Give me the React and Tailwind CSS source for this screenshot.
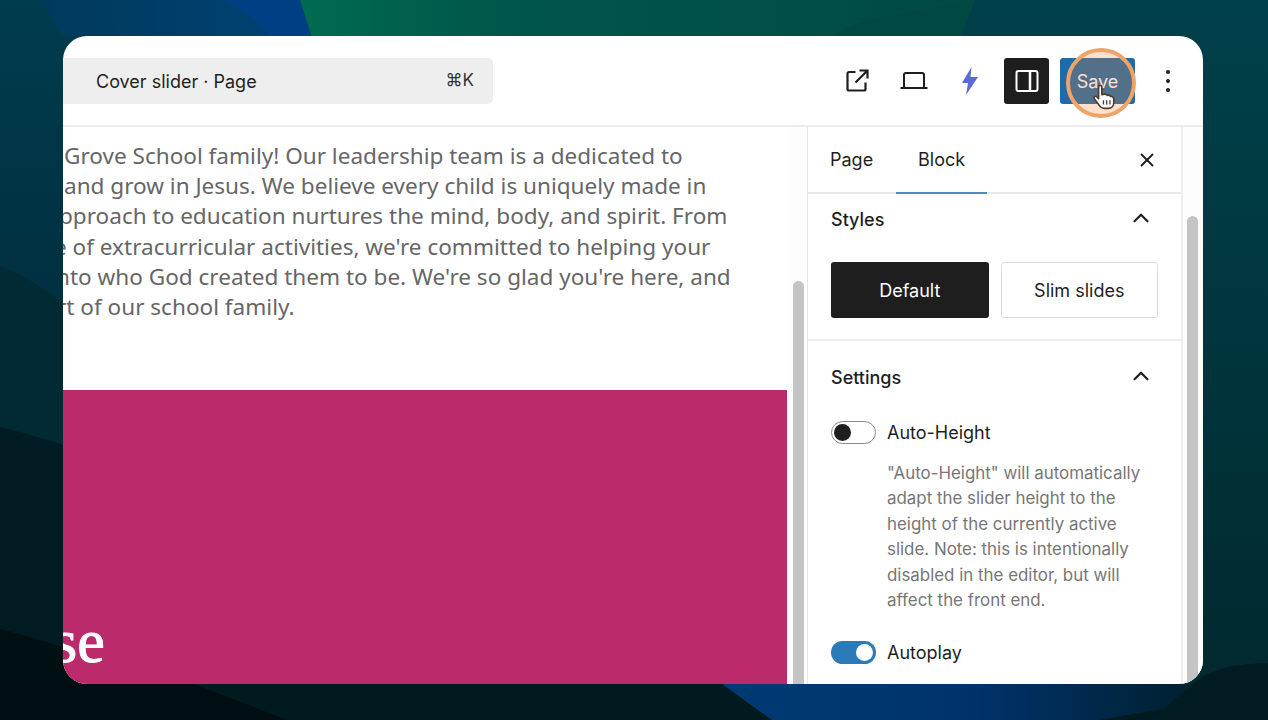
import React from "react";
import { X, ChevronUp } from "lucide-react";

const lines = [
  { t: "Grove School family! Our leadership team is a dedicated to", c: "ml-[1px]" },
  { t: "and grow in Jesus. We believe every child is uniquely made in", c: "ml-[1px]" },
  { t: "pproach to education nurtures the mind, body, and spirit. From", c: "ml-[-4px]" },
  { t: "e of extracurricular activities, we're committed to helping your", c: "ml-[-9px]" },
  { t: "nto who God created them to be. We're so glad you're here, and", c: "ml-[-7px]" },
  { t: "rt of our school family.", c: "ml-[-6px]" },
];

const desc = [
  '"Auto-Height" will automatically',
  "adapt the slider height to the",
  "height of the currently active",
  "slide. Note: this is intentionally",
  "disabled in the editor, but will",
  "affect the front end.",
];

function Background() {
  return (
    <svg className="absolute inset-0" width="1268" height="720" viewBox="0 0 1268 720">
      <defs>
        <linearGradient id="green" x1="300" y1="0" x2="980" y2="0" gradientUnits="userSpaceOnUse">
          <stop offset="0" stopColor="#006b50" />
          <stop offset="0.3" stopColor="#00564a" />
          <stop offset="1" stopColor="#004a44" />
        </linearGradient>
        <linearGradient id="blue" x1="40" y1="0" x2="225" y2="0" gradientUnits="userSpaceOnUse">
          <stop offset="0" stopColor="#00395a" />
          <stop offset="1" stopColor="#00406e" />
        </linearGradient>
        <linearGradient id="bottomBlue" x1="722" y1="0" x2="1190" y2="0" gradientUnits="userSpaceOnUse">
          <stop offset="0" stopColor="#003a72" />
          <stop offset="0.55" stopColor="#00326a" />
          <stop offset="1" stopColor="#002030" />
        </linearGradient>
        <linearGradient id="right" x1="0" y1="0" x2="0" y2="720" gradientUnits="userSpaceOnUse">
          <stop offset="0" stopColor="#00404a" />
          <stop offset="0.5" stopColor="#00353c" />
          <stop offset="0.9" stopColor="#002a30" />
        </linearGradient>
        <linearGradient id="left" x1="0" y1="0" x2="0" y2="300" gradientUnits="userSpaceOnUse">
          <stop offset="0" stopColor="#003c4e" />
          <stop offset="1" stopColor="#003040" />
        </linearGradient>
      </defs>
      <rect width="1268" height="720" fill="url(#right)" />
      <rect width="700" height="720" fill="url(#left)" />
      <path d="M40 0 C50 15 55 25 62 36 L320 36 L300 0 Z" fill="url(#blue)" />
      <path d="M225 0 C250 15 265 25 278 50 L320 50 L300 0 Z" fill="#003f84" />
      <path d="M300 0 L975 0 L955 50 L316 50 Z" fill="url(#green)" />
      <path d="M825 50 C835 30 850 25 870 20 L975 0 L955 50 Z" fill="#004842" />
      <path d="M0 266 C25 275 45 290 63 303 L120 340 L120 720 L0 720 Z" fill="#012a34" />
      <path d="M0 427 C25 433 45 439 63 445 L120 460 L120 720 L0 720 Z" fill="#001c22" />
      <path d="M0 629 C25 635 45 642 63 647 L120 660 L120 720 L0 720 Z" fill="#000f12" />
      <path d="M0 684 L1268 684 L1268 720 L0 720 Z" fill="#001a20" />
      <path d="M0 684 L194 684 L287 720 L0 720 Z" fill="#000e11" />
      <path d="M722 684 L1268 684 L1268 690 L1100 720 L772 720 Z" fill="url(#bottomBlue)" />
      <path d="M1203 676 C1225 666 1245 663 1268 663 L1268 720 L1150 720 Z" fill="#001c22" />
    </svg>
  );
}

function Toggle({ on }) {
  return on ? (
    <div className="w-[45px] h-[23px] rounded-full bg-[#2a7bb8] flex items-center justify-end pr-[3px]">
      <div className="w-[17px] h-[17px] rounded-full bg-white" />
    </div>
  ) : (
    <div className="w-[45px] h-[23px] rounded-full border border-[#8a8a8a] bg-white flex items-center pl-[2px]">
      <div className="w-[17px] h-[17px] rounded-full bg-[#1e1e1e]" />
    </div>
  );
}

export default function App() {
  return (
    <div className="relative w-[1268px] h-[720px] overflow-hidden bg-[#00222b] pt-[36px] pl-[63px] pr-[65px] pb-[36px] font-['Inter',sans-serif]">
      <Background />
      <div className="relative w-[1140px] h-[648px] bg-white rounded-[24px] overflow-hidden flex flex-col text-[#1e1e1e]">
        <header className="h-[91px] shrink-0 border-b-2 border-[#ececec] flex items-start">
          <div className="mt-[22px] w-[430px] h-[46px] bg-[#eeeeee] rounded-r-[5px] flex items-center justify-between pl-[33px] pr-[19px] text-[18px]">
            <span className="whitespace-nowrap">Cover slider · Page</span>
            <span className="text-[17px] text-[#333]">⌘K</span>
          </div>
          <div className="ml-auto mt-[22px] flex items-center h-[46px] pr-[22px]">
            <svg width="23" height="23" viewBox="0 0 23 23" fill="none" stroke="#1e1e1e" strokeWidth="2.2" className="mr-[31px] mb-[1px]">
              <path d="M9.500 3 H3 A1.500 1.500 0 0 0 1.500 4.500 V20 A1.500 1.500 0 0 0 3 21.500 H18 A1.500 1.500 0 0 0 19.500 20 V13.500" />
              <path d="M9.500 13.500 L21 2 M13.500 1.500 H21.500 V9.500" />
            </svg>
            <svg width="28" height="18" viewBox="0 0 28 18" fill="none" stroke="#1e1e1e" strokeWidth="2" className="mr-[33px]">
              <path d="M4 15.500 V3 A2 2 0 0 1 6 1 H22 A2 2 0 0 1 24 3 V15.500" />
              <path d="M0.500 16 H27.500" />
            </svg>
            <svg width="18" height="30" viewBox="0 0 18 30" className="mr-[25px]">
              <path d="M10.500 1 L1 17 H7 L5 29 L17 11 H9.500 Z" fill="#5b6bd5" />
            </svg>
            <div className="w-[45px] h-[46px] bg-[#1e1e1e] rounded-[3px] flex items-center justify-center mr-[11px]">
              <svg width="24" height="24" viewBox="0 0 24 24" fill="none" stroke="#ffffff" strokeWidth="2">
                <rect x="1.500" y="2" width="21" height="20" rx="2" />
                <path d="M15 2 V22" strokeWidth="2.500" />
              </svg>
            </div>
            <div className="w-[75px] h-[46px] bg-[#1f6aa8] rounded-[3px] flex items-center justify-center text-white text-[18px]">Save</div>
            <div className="ml-[20px] w-[26px] flex flex-col items-center gap-[5px]">
              <div className="w-[4px] h-[4px] rounded-full bg-[#1e1e1e]" />
              <div className="w-[4px] h-[4px] rounded-full bg-[#1e1e1e]" />
              <div className="w-[4px] h-[4px] rounded-full bg-[#1e1e1e]" />
            </div>
          </div>
        </header>

        <div className="flex-1 flex min-h-0">
          <main className="flex-1 min-w-0 flex">
            <div className="w-[724px] flex flex-col">
              <div className="h-[263px] shrink-0 pt-[14px] overflow-hidden font-['Noto_Sans',sans-serif] text-[#666] text-[22.550px] leading-[30.200px]">
                {lines.map((l) => (
                  <div key={l.t} className={`whitespace-nowrap ${l.c}`}>{l.t}</div>
                ))}
              </div>
              <div className="flex-1 bg-[#bb2a6b] overflow-hidden text-white font-['Liberation_Serif',serif] text-[62px] [-webkit-text-stroke:1px_white] leading-none pt-[220px]">
                <div className="ml-[-10px]">se</div>
              </div>
            </div>
            <div className="w-[20px] bg-[#fdfdfd] pl-[6px] pt-[154px]">
              <div className="w-[11px] h-full bg-[#c4c4c4] rounded-t-[6px]" />
            </div>
          </main>

          <aside className="w-[396px] shrink-0 border-l border-[#e6e6e6] flex">
            <div className="w-[375px] border-r-2 border-[#eeeeee] flex flex-col">
              <div className="h-[67px] shrink-0 border-b-2 border-[#e8e8e8] flex items-stretch text-[18px] relative">
                <div className="ml-[22px] flex items-center"><span>Page</span></div>
                <div className="ml-[23px] w-[91px] flex items-center justify-center border-b-2 border-[#4a8dbd] mb-[-2px]"><span>Block</span></div>
                <div className="ml-auto mr-[23px] flex items-center"><X size={22} strokeWidth={2} /></div>
              </div>
              <div className="h-[147px] shrink-0 border-b-2 border-[#ececec] px-[23px] pt-[13px]">
                <div className="flex items-center justify-between h-[24px] text-[18px] font-medium pr-[4px]">
                  <span>Styles</span>
                  <ChevronUp size={26} strokeWidth={2} className="mt-[-2px]" />
                </div>
                <div className="mt-[31px] flex gap-[12px] text-[18px]">
                  <div className="w-[158px] h-[56px] bg-[#1e1e1e] text-white rounded-[3px] flex items-center justify-center">Default</div>
                  <div className="w-[158px] h-[56px] border border-[#dcdcdc] rounded-[3px] flex items-center justify-center">Slim slides</div>
                </div>
              </div>
              <div className="flex-1 px-[23px] pt-[24px] overflow-hidden">
                <div className="flex items-center justify-between h-[24px] text-[18px] font-medium pr-[4px]">
                  <span>Settings</span>
                  <ChevronUp size={26} strokeWidth={2} className="mt-[-2px]" />
                </div>
                <div className="mt-[30px] flex items-center gap-[11px] text-[18px]">
                  <Toggle />
                  <span>Auto-Height</span>
                </div>
                <div className="mt-[15px] ml-[56px] text-[16.900px] leading-[25.400px] text-[#767676] whitespace-nowrap">
                  {desc.map((d) => (
                    <div key={d}>{d}</div>
                  ))}
                </div>
                <div className="mt-[26px] flex items-center gap-[11px] text-[18px]">
                  <Toggle on />
                  <span>Autoplay</span>
                </div>
              </div>
            </div>
            <div className="w-[20px] pl-[4px] pt-[89px] bg-[#fdfdfd]">
              <div className="w-[11px] h-full bg-[#c4c4c4] rounded-t-[6px]" />
            </div>
          </aside>
        </div>

        <div className="absolute left-[1003px] top-[12px] w-[70px] h-[70px] rounded-full border-[4px] border-[#eea468] bg-[#f08232]/25" />
        <svg className="absolute left-[1028px] top-[48px]" width="26" height="26" viewBox="0 0 24 24" fill="#fff" stroke="#4a3a30" strokeWidth="1.500" strokeLinejoin="round">
          <path d="M7 2.500 C7 1 10 1 10 2.500 V10 L12 9.500 C13.500 9 14.500 9.500 15 10.500 C16.500 10 17.500 10.500 18 11.500 C19.500 11.300 21 12 21 14 V17 C21 20 19 22.500 16 22.500 H12 C9.500 22.500 8.500 21 7 19 L3 13.500 C2 12 4 10.500 5.500 12 L7 13.500 Z" />
          <path d="M11.500 15 V19 M14.500 15 V19 M17.500 15 V19" strokeWidth="1.200" />
        </svg>
      </div>
    </div>
  );
}
